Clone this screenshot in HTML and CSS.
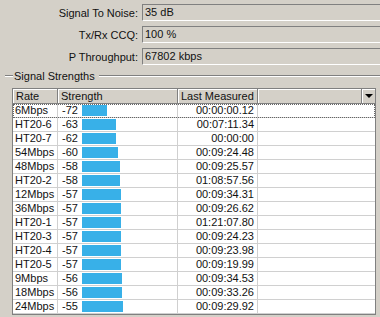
FILE: index.html
```html
<!DOCTYPE html>
<html lang="en">
<head>
    <meta charset="UTF-8">
    <title>Wireless Status</title>
    <link rel="stylesheet" href="styles.css">
</head>
<body>
    <div class="fields">
        <label>Signal To Noise:</label>
        <div class="box">35 dB</div>
        <label>Tx/Rx CCQ:</label>
        <div class="box">100 %</div>
        <label>P Throughput:</label>
        <div class="box">67802 kbps</div>
    </div>

    <div class="group-title">
        <span class="dash"></span>
        <span class="title">Signal Strengths</span>
        <span class="line"></span>
    </div>

    <table class="list">
        <thead>
            <tr>
                <th class="c-rate">Rate</th>
                <th class="c-str">Strength</th>
                <th class="c-last">Last Measured</th>
                <th class="c-extra"></th>
                <th class="c-menu"><span class="arrow"></span></th>
            </tr>
        </thead>
        <tbody>
            <tr class="focus"><td>6Mbps</td><td><div class="str"><span class="num">-72</span><span class="bar" style="width:25px"></span></div></td><td class="time">00:00:00.12</td><td colspan="2"></td></tr>
            <tr><td>HT20-6</td><td><div class="str"><span class="num">-63</span><span class="bar" style="width:34px"></span></div></td><td class="time">00:07:11.34</td><td colspan="2"></td></tr>
            <tr><td>HT20-7</td><td><div class="str"><span class="num">-62</span><span class="bar" style="width:34px"></span></div></td><td class="time">00:00:00</td><td colspan="2"></td></tr>
            <tr><td>54Mbps</td><td><div class="str"><span class="num">-60</span><span class="bar" style="width:36px"></span></div></td><td class="time">00:09:24.48</td><td colspan="2"></td></tr>
            <tr><td>48Mbps</td><td><div class="str"><span class="num">-58</span><span class="bar" style="width:38px"></span></div></td><td class="time">00:09:25.57</td><td colspan="2"></td></tr>
            <tr><td>HT20-2</td><td><div class="str"><span class="num">-58</span><span class="bar" style="width:38px"></span></div></td><td class="time">01:08:57.56</td><td colspan="2"></td></tr>
            <tr><td>12Mbps</td><td><div class="str"><span class="num">-57</span><span class="bar" style="width:39px"></span></div></td><td class="time">00:09:34.31</td><td colspan="2"></td></tr>
            <tr><td>36Mbps</td><td><div class="str"><span class="num">-57</span><span class="bar" style="width:39px"></span></div></td><td class="time">00:09:26.62</td><td colspan="2"></td></tr>
            <tr><td>HT20-1</td><td><div class="str"><span class="num">-57</span><span class="bar" style="width:39px"></span></div></td><td class="time">01:21:07.80</td><td colspan="2"></td></tr>
            <tr><td>HT20-3</td><td><div class="str"><span class="num">-57</span><span class="bar" style="width:39px"></span></div></td><td class="time">00:09:24.23</td><td colspan="2"></td></tr>
            <tr><td>HT20-4</td><td><div class="str"><span class="num">-57</span><span class="bar" style="width:39px"></span></div></td><td class="time">00:09:23.98</td><td colspan="2"></td></tr>
            <tr><td>HT20-5</td><td><div class="str"><span class="num">-57</span><span class="bar" style="width:39px"></span></div></td><td class="time">00:09:19.99</td><td colspan="2"></td></tr>
            <tr><td>9Mbps</td><td><div class="str"><span class="num">-56</span><span class="bar" style="width:40px"></span></div></td><td class="time">00:09:34.53</td><td colspan="2"></td></tr>
            <tr><td>18Mbps</td><td><div class="str"><span class="num">-56</span><span class="bar" style="width:40px"></span></div></td><td class="time">00:09:33.26</td><td colspan="2"></td></tr>
            <tr><td>24Mbps</td><td><div class="str"><span class="num">-55</span><span class="bar" style="width:41px"></span></div></td><td class="time">00:09:29.92</td><td colspan="2"></td></tr>
        </tbody>
    </table>
</body>
</html>
```

FILE: styles.css
```css
body {
    margin: 0;
    background: #d4d0c8;
    font-family: "Liberation Sans", Arial, sans-serif;
    font-size: 11px;
    color: #111;
    overflow: hidden;
    height: 317px;
}
.fields {
    display: grid;
    grid-template-columns: 138px 238px;
    column-gap: 4px;
    row-gap: 5px;
    padding-top: 4px;
    align-items: center;
}
.fields label {
    text-align: right;
}
.box {
    box-sizing: border-box;
    height: 17px;
    line-height: 15px;
    padding-left: 2px;
    border: 1px solid;
    border-right: 0;
    border-color: #808080 #fff #fff #808080;
}
.group-title {
    display: flex;
    align-items: center;
    height: 14px;
    margin-top: 4px;
}
.group-title .dash,
.group-title .line {
    height: 1px;
    background: #808080;
    border-bottom: 1px solid #fff;
}
.group-title .dash {
    width: 8px;
    margin-left: 5px;
}
.group-title .title {
    padding: 0 4px 0 1px;
}
.group-title .line {
    flex: 1;
}
.list {
    margin: 5px 0 0 12px;
    width: 364px;
    table-layout: fixed;
    border-collapse: separate;
    border-spacing: 0;
    border: 1px solid #808080;
    background: #fff;
}
.list th,
.list td {
    box-sizing: border-box;
    padding: 0 2px;
    white-space: nowrap;
    overflow: hidden;
    text-align: left;
    font-weight: normal;
}
.list th {
    height: 15px;
    line-height: 14px;
    background: #d4d0c8;
    border-right: 1px solid #808080;
    border-bottom: 1px solid #808080;
    box-shadow: inset 1px 1px #fff;
    padding-left: 3px;
}
.list th.c-menu {
    border-right: 0;
    padding: 0;
}
.c-rate { width: 45px; }
.c-str { width: 120px; }
.c-last { width: 80px; }
.c-extra { width: 104px; }
.c-menu { width: 13px; }
.list td {
    height: 14px;
    line-height: 13px;
    border-right: 1px solid #d0d0d0;
    border-bottom: 1px solid #d0d0d0;
}
.list td:last-child {
    border-right: 0;
}
.list td.time {
    text-align: right;
    padding-right: 3px;
}
.list tr.focus {
    outline: 1px dotted #666;
    outline-offset: -1px;
}
.str {
    display: flex;
    align-items: center;
    padding-left: 2px;
}
.num {
    width: 20px;
}
.bar {
    height: 11px;
    background: #38b0e8;
}
.arrow {
    display: block;
    margin: 0 auto;
    width: 0;
    height: 0;
    border-left: 4px solid transparent;
    border-right: 4px solid transparent;
    border-top: 4px solid #000;
}
```
